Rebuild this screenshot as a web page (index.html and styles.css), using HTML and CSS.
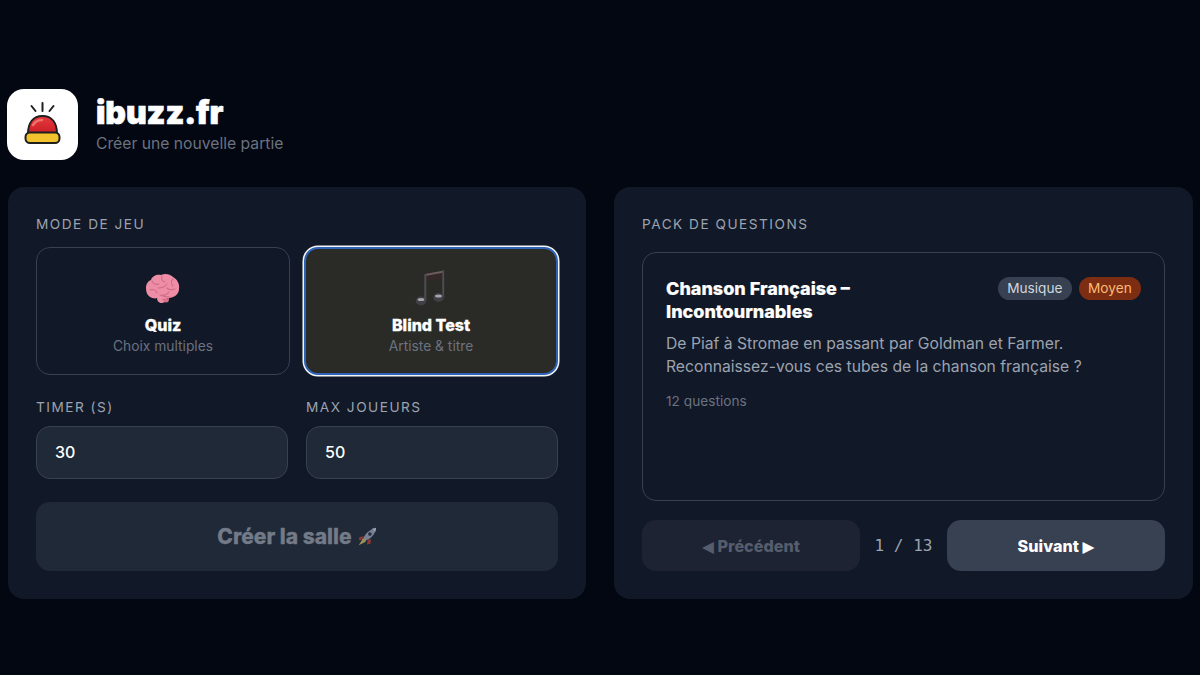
FILE: index.html
```html
<!DOCTYPE html>
<html lang="fr">
<head>
<meta charset="utf-8">
<title>ibuzz.fr</title>
<link rel="stylesheet" href="styles.css">
</head>
<body>
<header class="header">
  <div class="logo">
    <svg viewBox="0 0 71 71" width="71" height="71">
      <defs>
        <linearGradient id="dome" x1="0" y1="0" x2="0" y2="1">
          <stop offset="0" stop-color="#e8383c"/>
          <stop offset="1" stop-color="#c91f28"/>
        </linearGradient>
      </defs>
      <g stroke="#1f1f1f" stroke-width="2" stroke-linecap="round">
        <path d="M35.500 14v8M24.500 17l4 5M46.500 17l-4 5"/>
      </g>
      <path d="M21 45c0-11 5-18 14.500-18S50 34 50 45z" fill="url(#dome)" stroke="#1f1f1f" stroke-width="2"/>
      <path d="M26 36c2-3 5-5 9-5" stroke="#f0706c" stroke-width="2.500" fill="none" stroke-linecap="round"/>
      <rect x="18.500" y="43.500" width="34" height="10.500" rx="4.500" fill="#f2c32c" stroke="#1f1f1f" stroke-width="2"/>
    </svg>
  </div>
  <div class="brand">
    <h1 class="brand-name">ibuzz.fr</h1>
    <p class="brand-sub">Créer une nouvelle partie</p>
  </div>
</header>
<main class="columns">
  <section class="panel">
    <div class="label">MODE DE JEU</div>
    <div class="modes">
      <div class="mode">
        <svg class="emoji" viewBox="0 0 36 36" width="36" height="36">
          <path d="M1 17c0-4 2-7 5-8 1-4 6-6 10-5 4-2 9-1 12 2 4 2 7 7 6 12 0 4-3 7-6 8-2 1-4 1-6 1 0 2-2 5-5 5s-5-2-5-5c-2 1-5 0-7-1-3-2-4-5-4-9z" fill="#ee8ea6"/>
          <path d="M7 10c1 3 4 4 7 3M17 5c-1 3 0 5 3 6M28 8c-2 2-2 5 0 7M5 19c3-1 6 0 7 3M13 17c3 0 7-1 9-4M22 17c2 2 5 2 8 1M15 24c3 1 7 0 9-3M25 26c-2 0-5 0-7-1" stroke="#cf6a87" stroke-width="1.100" fill="none" stroke-linecap="round"/>
          <path d="M17 28c1 3 4 4 6 3 1-1 1-3 1-4z" fill="#d8708a"/>
        </svg>
        <div class="mode-title">Quiz</div>
        <div class="mode-sub">Choix multiples</div>
      </div>
      <div class="mode mode-active">
        <svg class="emoji" viewBox="0 0 36 36" width="36" height="36">
          <path d="M12 4l19-3.500v8L12 12z" fill="#352828"/>
          <path d="M12 4l19-3.500v2L12 6z" fill="#6d5d5d"/>
          <path d="M12.300 4v27M30.200 .5v27" stroke="#4d4d52" stroke-width="2"/>
          <ellipse cx="8" cy="31" rx="5.400" ry="4.400" fill="#3f3f45"/>
          <ellipse cx="25.500" cy="27.500" rx="5.400" ry="4.400" fill="#3f3f45"/>
          <ellipse cx="8" cy="29.500" rx="3.400" ry="1.500" fill="#a5a5aa"/>
          <ellipse cx="25.500" cy="26" rx="3.400" ry="1.500" fill="#a5a5aa"/>
        </svg>
        <div class="mode-title">Blind Test</div>
        <div class="mode-sub">Artiste &amp; titre</div>
      </div>
    </div>
    <div class="fields">
      <div class="field">
        <label class="label" for="timer">TIMER (S)</label>
        <input class="input" id="timer" value="30">
      </div>
      <div class="field">
        <label class="label" for="max">MAX JOUEURS</label>
        <input class="input" id="max" value="50">
      </div>
    </div>
    <button class="create">Créer la salle
      <svg class="rocket" viewBox="0 0 24 24" width="20" height="20">
        <path d="M9 11l-6 1-1 4 5-1z" fill="#a13c38"/>
        <path d="M13 15l-1 6 4-1 1-5z" fill="#a13c38"/>
        <path d="M7 17C8 9 15 3 23 1c-1 8-7 15-16 16z" fill="#8793a6"/>
        <path d="M18 2l5-1-1 5c-1-2-2-3-4-4z" fill="#a9b6c6"/>
        <circle cx="15.500" cy="8.500" r="2.200" fill="#2b2f45"/>
        <path d="M7 14l-5 8 8-4 1-3z" fill="#b5a45c"/>
      </svg>
    </button>
  </section>
  <section class="panel">
    <div class="label">PACK DE QUESTIONS</div>
    <article class="pack">
      <div class="pack-head">
        <h2 class="pack-title">Chanson Française – Incontournables</h2>
        <div class="tags">
          <span class="tag tag-cat">Musique</span>
          <span class="tag tag-level">Moyen</span>
        </div>
      </div>
      <p class="pack-desc">De Piaf à Stromae en passant par Goldman et Farmer. Reconnaissez-vous ces tubes de la chanson française ?</p>
      <p class="pack-count">12 questions</p>
    </article>
    <nav class="pager">
      <button class="page-btn page-prev"><span class="tri">◀</span> Précédent</button>
      <span class="counter">1 / 13</span>
      <button class="page-btn page-next">Suivant <span class="tri">▶</span></button>
    </nav>
  </section>
</main>
</body>
</html>
```
FILE: styles.css
```css
* { box-sizing: border-box; }
html, body { margin: 0; height: 100%; }
body {
  background: #030712;
  color: #fff;
  font-family: Inter, "Noto Sans", sans-serif;
  padding: 89px 7px 0 8px;
  overflow: hidden;
}
.header { display: flex; align-items: flex-start; gap: 18px; height: 70px; margin-bottom: 28px; }
.logo { width: 71px; height: 71px; margin-left: -1px; border-radius: 17px; background: #fff; flex: none; overflow: hidden; }
.logo svg { display: block; }
.brand-name { margin: 0; font-size: 32px; line-height: 38px; font-weight: 900; letter-spacing: -0.1px; padding-top: 5px; -webkit-text-stroke: 0.7px #fff; }
.brand-sub { margin: 2px 0 0; font-size: 15.700px; line-height: 20px; color: #6b7280; }
.columns { display: grid; grid-template-columns: 578px 579px; gap: 28px; }
.panel { background: #111827; border-radius: 16px; height: 412px; padding: 28px; display: flex; flex-direction: column; }
.label { display: block; font-size: 13.650px; line-height: 18px; letter-spacing: 1.500px; color: #9ca3af; }
.modes { display: grid; grid-template-columns: 254px 254px; gap: 14px; margin-top: 14px; }
.mode { height: 128px; border: 1px solid #374151; border-radius: 14px; display: flex; flex-direction: column; align-items: center; padding-top: 23px; }
.mode-active { background: #2a2b26; border: 2px solid #2f63b5; box-shadow: 0 0 0 1.500px #f3f4f6; padding-top: 21px; }
.emoji { display: block; height: 36px; }
.mode-active .emoji { margin-bottom: 1px; }
.mode-title { font-size: 16px; line-height: 22px; font-weight: 800; margin-top: 7px; -webkit-text-stroke: 0.3px #fff; }
.mode-sub { font-size: 13.800px; line-height: 18px; color: #6b7280; margin-top: 1px; }
.fields { display: grid; grid-template-columns: 252px 252px; gap: 18px; margin-top: 23px; }
.field { display: flex; flex-direction: column; gap: 10px; }
.input { height: 53px; width: 100%; background: #1f2937; border: 1px solid #374151; border-radius: 14px; color: #fff; font: 500 16px Inter, sans-serif; padding: 0 18px 2px; outline: none; }
.create { height: 70px; margin-top: 23px; width: 100%; border: 0; border-radius: 14px; background: #1f2937; color: #737a88; font: 800 21px Inter, sans-serif; display: flex; align-items: center; justify-content: center; gap: 5px; -webkit-text-stroke: 0.3px #737a88; }
.rocket { display: block; opacity: 0.85; }
.pack { height: 250px; margin-top: 19px; border: 1px solid #374151; border-radius: 14px; padding: 24px 23px; }
.pack-head { display: flex; justify-content: space-between; align-items: flex-start; gap: 12px; }
.pack-title { margin: 0; font-size: 18px; line-height: 23px; font-weight: 800; width: 230px; -webkit-text-stroke: 0.2px #fff; }
.tags { display: flex; gap: 7px; }
.tag { font-size: 13.650px; line-height: 23px; padding: 0 9.300px; border-radius: 12px; }
.tag-cat { background: #374151; color: #d1d5db; }
.tag-level { background: #7c2d12; color: #fdba74; }
.pack-desc { margin: 9px 0 0; font-size: 15.700px; line-height: 23px; color: #9ca3af; }
.pack-count { margin: 14px 0 0; font-size: 13.700px; line-height: 18px; color: #6b7280; }
.pager { display: flex; align-items: center; justify-content: space-between; margin-top: 19px; }
.page-btn { width: 218px; height: 51px; border: 0; border-radius: 14px; font: 800 16.200px Inter, sans-serif; }
.tri { font-size: 15.500px; font-family: "DejaVu Sans", sans-serif; }
.page-prev { background: #1d2333; color: #565d6c; }
.page-next { background: #374151; color: #fff; }
.counter { font: 16px "DejaVu Sans Mono", monospace; color: #9ca3af; }
```
